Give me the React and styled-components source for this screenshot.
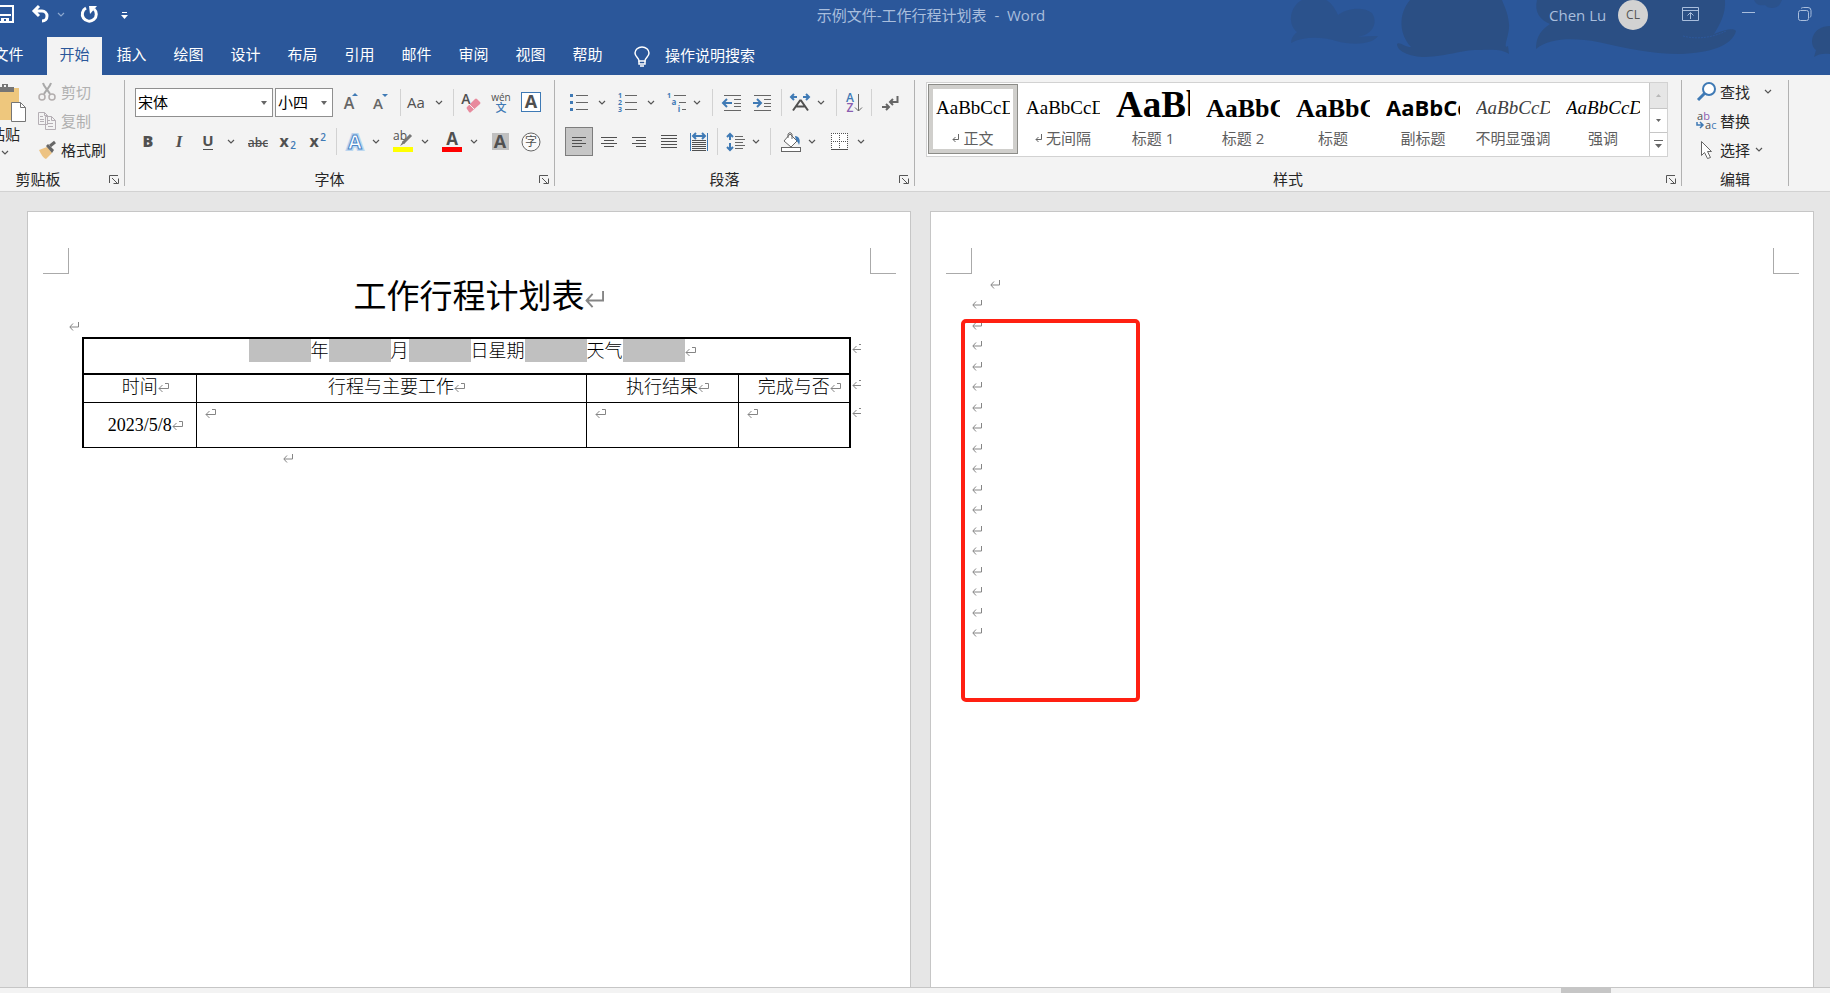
import React from "react";
import styled, { createGlobalStyle, css } from "styled-components";

const UI_FONT = `"Open Sans", "Noto Sans CJK SC", sans-serif`;
const DOC_FONT = `"Liberation Serif", "Noto Sans CJK SC", serif`;
const BLUE = "#3f7ab5";
const GRAY = "#666666";
const DARK = "#505050";

export default function App() {
  return (
    <Window>
      <GlobalStyle />
      <Header>
        <HeaderArt />
        <TitleBar />
        <TabBar />
      </Header>
      <Ribbon>
        <ClipboardGroup />
        <FontGroup />
        <ParagraphGroup />
        <StylesGroup />
        <EditingGroup />
      </Ribbon>
      <Workspace>
        <PlanPage />
        <BlankPage />
      </Workspace>
      <ScrollTrack>
        <ScrollThumb />
      </ScrollTrack>
    </Window>
  );
}

/* ---------- header ---------- */

function HeaderArt() {
  return (
    <Art viewBox="0 0 560 75" aria-hidden="true">
      <g fill="#2b4f84">
        <path
          opacity="0.6"
          d="M32 0C20 6 17 24 27 32 23 35 21 39 21 43 34 36 52 37 66 41 84 46 103 44 108 36 101 36 94 36 88 37 104 34 108 22 102 13 94 6 76 8 68 15 64 6 60 2 56 0Z"
        />
        <path d="M140 0C128 14 129 34 141 47 135 47 129 41 127 44 127 52 142 57 154 57 180 56 190 50 208 50 226 49 234 50 239 54L238 46C232 50 240 34 239 24 238 12 234 6 232 0Z" />
        <path d="M267 0C264 12 270 20 280 24 268 32 266 40 266 49 280 37 306 38 328 42 356 48 380 54 410 54 440 53 462 46 466 31 464 28 456 29 444 34 450 24 456 14 455 0Z" />
        <path opacity="0.6" d="M484 0C486 5 491 6 495 5 498 9 507 9 510 4L512 0Z" />
        <path d="M560 26C542 26 538 44 546 50L544 57C548 54 554 53 560 54Z" />
      </g>
      <path d="M413 36C428 40 444 37 456 31" fill="none" stroke="#2b579a" strokeWidth="1" strokeDasharray="2 1" />
    </Art>
  );
}

function TitleBar() {
  return (
    <TitleRow>
      <QuickAccess>
        <QuickButton aria-label="保存">
          <svg width="18" height="18" viewBox="0 0 18 18">
            <path d="M1 1h16v16H3l-2-2z" fill="none" stroke="#fff" strokeWidth="2" />
            <path d="M4 9h11v2H4z M5 13h8v4h-3v-3h-2v3H5z" fill="#fff" />
          </svg>
        </QuickButton>
        <QuickButton aria-label="撤消">
          <svg width="18" height="18" viewBox="0 0 18 18">
            <path d="M9 1 4 6l5 5M4 6h8a5 5 0 0 1 5 5c0 3-2 5-5 5" fill="none" stroke="#fff" strokeWidth="3" />
          </svg>
          <Chevron color="#8da8cf" />
        </QuickButton>
        <QuickButton aria-label="恢复">
          <svg width="18" height="18" viewBox="0 0 18 18">
            <path d="M5 3a7 7 0 1 0 8 1" fill="none" stroke="#fff" strokeWidth="3" />
            <path d="M8 1h8L9 9z" fill="#fff" />
          </svg>
        </QuickButton>
        <QuickButton aria-label="自定义快速访问工具栏" $apart>
          <svg width="7" height="8" viewBox="0 0 7 8">
            <path d="M1 2.500h5" stroke="#fff" />
            <path d="M0 5h7L3.500 9z" fill="#fff" />
          </svg>
        </QuickButton>
      </QuickAccess>
      <DocTitle>示例文件-工作行程计划表&nbsp; -&nbsp; Word</DocTitle>
      <Account>
        <UserName>Chen Lu</UserName>
        <Avatar>CL</Avatar>
        <WindowButtons>
          <QuickButton aria-label="功能区显示选项">
            <svg width="17" height="14" viewBox="0 0 17 14">
              <path d="M.5.5h16v13H.5zM.5 3.500h16M8.500 12V6M5.500 8.500l3-3 3 3" fill="none" stroke="#a9bedd" />
            </svg>
          </QuickButton>
          <QuickButton aria-label="最小化">
            <svg width="13" height="14" viewBox="0 0 13 14">
              <path d="M0 5.500h13" stroke="#a9bedd" />
            </svg>
          </QuickButton>
          <QuickButton aria-label="还原">
            <svg width="14" height="14" viewBox="0 0 14 14">
              <rect x=".5" y="3.500" width="10" height="10" rx="2" fill="none" stroke="#a9bedd" />
              <path d="M3 1.500c1-1 2-1 3-1h4q3 0 3 3v4c0 1 0 2-1 3" fill="none" stroke="#a9bedd" />
            </svg>
          </QuickButton>
        </WindowButtons>
      </Account>
    </TitleRow>
  );
}

const tabs = ["插入", "绘图", "设计", "布局", "引用", "邮件", "审阅", "视图", "帮助"];

function TabBar() {
  return (
    <Tabs>
      <Tab $file>文件</Tab>
      <Tab $active>开始</Tab>
      {tabs.map((name) => (
        <Tab key={name}>{name}</Tab>
      ))}
      <TellMe>
        <svg width="16" height="21" viewBox="0 0 16 21">
          <path d="M5 15c0-3-4-4-4-8a7 6 0 0 1 14 0c0 4-4 5-4 8z" fill="none" stroke="#fff" strokeWidth="1.500" />
          <path d="M5 15v3h6v-3M6 20h4" fill="none" stroke="#fff" strokeWidth="1.500" />
        </svg>
        <TellMeInput aria-label="操作说明搜索" placeholder="操作说明搜索" />
      </TellMe>
    </Tabs>
  );
}

/* ---------- ribbon parts ---------- */

function Chevron({ color = "#555" }) {
  return (
    <svg width="8" height="5" viewBox="0 0 8 5">
      <path d="M1 1l3 3 3-3" fill="none" stroke={color} strokeWidth="1.200" />
    </svg>
  );
}

function GroupFooter({ label, launcher = true }) {
  return (
    <Footer>
      <FooterLabel>{label}</FooterLabel>
      {launcher && (
        <Launcher aria-label={`${label}设置`}>
          <svg width="10" height="9" viewBox="0 0 10 9">
            <path d="M.5 8V.5H9M3 3l5 5M9.500 3.500v5h-5" fill="none" stroke="#555" />
          </svg>
        </Launcher>
      )}
    </Footer>
  );
}

function ToolButton({ label, children, selected, slim }) {
  return (
    <Tool aria-label={label} title={label} $selected={selected} $slim={slim}>
      <Glyph viewBox="0 0 22 24">{children}</Glyph>
    </Tool>
  );
}

function SplitButton({ label, children, near }) {
  return (
    <Split $near={near}>
      <ToolButton label={label}>{children}</ToolButton>
      <DropButton aria-label={`${label}选项`}>
        <Chevron />
      </DropButton>
    </Split>
  );
}

function Letter({ x = 11, y = 18, size = 16, fill = DARK, weight = 600, children, ...rest }) {
  return (
    <text x={x} y={y} fontSize={size} fill={fill} fontWeight={weight} textAnchor="middle" {...rest}>
      {children}
    </text>
  );
}

const lines = (rows) => rows.map(([x1, x2, y]) => `M${x1} ${y}.5H${x2}`).join("");

/* ---------- ribbon groups ---------- */

function ClipboardGroup() {
  return (
    <Group $clipboard>
      <Columns>
        <PasteButton>
          <svg width="44" height="40" viewBox="0 0 44 40">
            <path d="M8 5h28v32H8z" fill="#eec77d" />
            <path d="M13 9V4h6V1h6v3h6v5z" fill="#757575" />
            <path d="M21 2h2v2h-2z" fill="#f3f3f3" />
            <path d="M28.500 19.500h9l5 5v14h-14z" fill="#fff" stroke="#757575" />
            <path d="M37.500 19.500v5h5" fill="none" stroke="#757575" />
          </svg>
          <span>粘贴</span>
          <Chevron />
        </PasteButton>
        <Commands>
          <Command disabled>
            <CommandIcon viewBox="0 0 20 20">
              <path d="M5 1c1 4 5 7 7 11M13 1c-1 4-5 7-7 11" fill="none" stroke="#a9a9a9" strokeWidth="2" />
              <circle cx="4" cy="15" r="3" fill="none" stroke="#b3aeae" strokeWidth="1.500" />
              <circle cx="14" cy="15" r="3" fill="none" stroke="#b3aeae" strokeWidth="1.500" />
            </CommandIcon>
            剪切
          </Command>
          <Command disabled>
            <CommandIcon viewBox="0 0 20 20">
              <path d="M.5 1.500h6l3 3v9h-9zM6.500 1.500v3h3M7.500 5.500h6l4 4v9h-10zM13.500 5.500v4h4" fill="#f3f3f3" stroke="#b5afb5" />
              <path d="M2 5.500h3M2 8.500h4M2 10.500h4M10 9.500h2M10 12.500h5M10 15.500h5" stroke="#b5afb5" />
            </CommandIcon>
            复制
          </Command>
          <Command>
            <CommandIcon viewBox="0 0 20 20">
              <path d="M1 10l8-3 5 6-6 6c-3-1-5-5-7-9z" fill="#edc383" />
              <path d="M8 6l2-2 6 6-2 3z" fill="#666" />
              <path d="M12 6l5-4" stroke="#666" strokeWidth="3" />
            </CommandIcon>
            格式刷
          </Command>
        </Commands>
      </Columns>
      <GroupFooter label="剪贴板" />
    </Group>
  );
}

function FontGroup() {
  return (
    <Group $width={430}>
      <Rows>
        <ToolRow $inset={10}>
          <Combos>
            <Combo $width={138}>
              <ComboSelect aria-label="字体">
                <option>宋体</option>
              </ComboSelect>
              <ComboArrow viewBox="0 0 6 4">
                <path d="M0 0h6L3 4z" fill="#666" />
              </ComboArrow>
            </Combo>
            <Combo $width={58}>
              <ComboSelect aria-label="字号">
                <option>小四</option>
              </ComboSelect>
              <ComboArrow viewBox="0 0 6 4">
                <path d="M0 0h6L3 4z" fill="#666" />
              </ComboArrow>
            </Combo>
          </Combos>
          <ToolButton label="增大字号">
            <Letter x={8} fill={GRAY}>A</Letter>
            <path d="M11 5l3-3 3 3z" fill={BLUE} />
          </ToolButton>
          <ToolButton label="减小字号">
            <Letter x={7} size={15} fill={GRAY}>A</Letter>
            <path d="M11 3h6l-3 3z" fill={BLUE} />
          </ToolButton>
          <Divider $tight />
          <SplitButton label="更改大小写" near>
            <Letter x={8} y={17} size={15} weight={400}>Aa</Letter>
          </SplitButton>
          <Divider $tight />
          <ToolButton label="清除所有格式">
            <Letter x={5} y={13} size={14}>A</Letter>
            <path d="M6 16l8-8q1-1 2 0l3 3q1 1 0 2l-9 8q-1 1-2 0l-2-3q-1-1 0-2z" fill="#e88a9d" />
            <path d="M8 13l5 5" stroke="#f3f3f3" />
          </ToolButton>
          <ToolButton label="拼音指南">
            <Letter x={10} y={10} size={10} weight={400}>wén</Letter>
            <Letter x={10} y={21} size={11} weight={500} fill={BLUE}>文</Letter>
          </ToolButton>
          <ToolButton label="字符边框">
            <rect x=".5" y="1.500" width="19" height="19" fill="#fff" stroke={BLUE} />
            <Letter x={10} size={18} y={17} weight={700}>A</Letter>
          </ToolButton>
        </ToolRow>
        <ToolRow $inset={12}>
          <ToolButton label="加粗">
            <Letter y={17} weight={800}>B</Letter>
          </ToolButton>
          <ToolButton label="倾斜">
            <Letter x={12} y={17} size={17} weight={700} fontStyle="italic" fontFamily="Liberation Serif">I</Letter>
          </ToolButton>
          <SplitButton label="下划线">
            <Letter y={16} size={15} weight={700}>U</Letter>
            <path d="M6 19.500h10" stroke={DARK} />
          </SplitButton>
          <ToolButton label="删除线">
            <Letter x={12} y={17} size={12}>abc</Letter>
            <path d="M2 13.500h20" stroke={DARK} />
          </ToolButton>
          <ToolButton label="下标">
            <Letter x={8} y={17} weight={700}>x</Letter>
            <Letter x={17} y={19} size={10} fill={BLUE}>2</Letter>
          </ToolButton>
          <ToolButton label="上标">
            <Letter x={8} y={17} weight={700}>x</Letter>
            <Letter x={17} y={11} size={10} fill={BLUE}>2</Letter>
          </ToolButton>
          <Divider />
          <SplitButton label="文本效果" near>
            <Letter x={10} y={19} size={20} weight={700} fill="#fff" stroke="#bcd6ef" strokeWidth="4">A</Letter>
            <Letter x={10} y={19} size={20} weight={700} fill="#fff" stroke="#4a86c8" strokeWidth="1">A</Letter>
          </SplitButton>
          <SplitButton label="突出显示">
            <Letter x={9} y={10} size={12} weight={400}>ab</Letter>
            <path d="M20 5l-8 8" stroke="#777" strokeWidth="3" />
            <path d="M12 11l2 2-5 3z" fill="#777" />
            <path d="M2 17h20v5H2z" fill="#ff0" />
          </SplitButton>
          <SplitButton label="字体颜色">
            <Letter x={12} y={15} size={17} weight={700}>A</Letter>
            <path d="M2 17h20v5H2z" fill="#f00" />
          </SplitButton>
          <ToolButton label="字符底纹">
            <path d="M3 3h17v17H3z" fill="#c0c0c0" />
            <Letter y={18} size={18} weight={700}>A</Letter>
          </ToolButton>
          <ToolButton label="带圈字符">
            <circle cx="12" cy="12" r="9" fill="#fafafa" stroke={GRAY} />
            <Letter x={12} y={16} size={12} weight={400}>字</Letter>
          </ToolButton>
        </ToolRow>
      </Rows>
      <GroupFooter label="字体" />
    </Group>
  );
}

function ParagraphGroup() {
  return (
    <Group $width={360}>
      <Rows>
        <ToolRow $inset={13}>
          <SplitButton label="项目符号">
            <path d="M2 3h3v3H2zM2 10h3v3H2zM2 17h3v3H2z" fill={BLUE} />
            <path d={lines([[8, 20, 4], [8, 20, 11], [8, 20, 18]])} stroke={GRAY} />
          </SplitButton>
          <SplitButton label="编号">
            <Letter x={3} y={7} size={7} weight={700} fill={BLUE}>1</Letter>
            <Letter x={3} y={14} size={7} weight={700} fill={BLUE}>2</Letter>
            <Letter x={3} y={21} size={7} weight={700} fill={BLUE}>3</Letter>
            <path d={lines([[8, 20, 4], [8, 20, 11], [8, 20, 18]])} stroke={GRAY} />
          </SplitButton>
          <SplitButton label="多级列表" near>
            <Letter x={3} y={7} size={7} weight={700} fill={BLUE}>1</Letter>
            <Letter x={8} y={14} size={8} weight={700} fill={BLUE}>a</Letter>
            <Letter x={13} y={21} size={8} weight={700} fill={BLUE}>i</Letter>
            <path d={lines([[8, 20, 4], [13, 20, 11], [16, 20, 18]])} stroke={GRAY} />
          </SplitButton>
          <Divider />
          <ToolButton label="减少缩进量">
            <path d={lines([[3, 20, 4], [13, 20, 8], [13, 20, 12], [13, 20, 15], [3, 20, 19]])} stroke={GRAY} />
            <path d="M2 12h9M6 8l-4 4 4 4" fill="none" stroke={BLUE} strokeWidth="2" />
          </ToolButton>
          <ToolButton label="增加缩进量">
            <path d={lines([[3, 20, 4], [13, 20, 8], [13, 20, 12], [13, 20, 15], [3, 20, 19]])} stroke={GRAY} />
            <path d="M2 12h8M6 8l4 4-4 4" fill="none" stroke={BLUE} strokeWidth="2" />
          </ToolButton>
          <Divider />
          <SplitButton label="中文版式" near>
            <path d="M3 19.500l7-10h1l7 10M6 15.500h9" fill="none" stroke={DARK} strokeWidth="2" />
            <path d="M1 6h6M13 6h6M4 3L1 6l3 3M16 3l3 3-3 3" fill="none" stroke={BLUE} strokeWidth="2" />
          </SplitButton>
          <Divider />
          <ToolButton label="排序" slim>
            <Letter x={7} y={11} size={12} fill={BLUE}>A</Letter>
            <Letter x={7} y={21} size={12} fill="#8a5db0">Z</Letter>
            <path d="M15.500 3v17M12 16.500l3.500 3.500 3.500-3.500" fill="none" stroke={GRAY} />
          </ToolButton>
          <Divider />
          <ToolButton label="显示编辑标记">
            <path d="M17.500 5v6H10M13 8l-3 3 3 3M2 16h7M6 13l3 3-3 3" fill="none" stroke={GRAY} strokeWidth="2" />
          </ToolButton>
        </ToolRow>
        <ToolRow $inset={13}>
          <ToolButton label="左对齐" selected>
            <path d={lines([[4, 18, 7], [4, 14, 10], [4, 18, 13], [4, 14, 16]])} stroke={DARK} />
          </ToolButton>
          <ToolButton label="居中">
            <path d={lines([[3, 19, 7], [6, 16, 10], [3, 19, 13], [6, 16, 16]])} stroke={DARK} />
          </ToolButton>
          <ToolButton label="右对齐">
            <path d={lines([[4, 18, 7], [8, 18, 10], [4, 18, 13], [8, 18, 16]])} stroke={DARK} />
          </ToolButton>
          <ToolButton label="两端对齐">
            <path d={lines([[3, 19, 5], [3, 19, 8], [3, 19, 11], [3, 19, 14], [3, 19, 17]])} stroke={DARK} />
          </ToolButton>
          <ToolButton label="分散对齐">
            <path d={lines([[4, 18, 10], [4, 18, 12], [4, 18, 14], [4, 18, 16], [4, 18, 18], [4, 18, 20]])} stroke={DARK} />
            <path d="M2.500 3v18M19.500 3v18" stroke={BLUE} />
            <path d="M5 6h12M8 3L5 6l3 3M14 3l3 3-3 3" fill="none" stroke={BLUE} strokeWidth="2" />
          </ToolButton>
          <Divider $tight />
          <SplitButton label="行和段落间距" near>
            <path d="M5 4v6M2 7l3-3 3 3M5 13v6M2 17l3 3 3-3" fill="none" stroke={BLUE} strokeWidth="2" />
            <path d={lines([[10, 18, 6], [10, 20, 9], [10, 18, 12], [10, 20, 15], [10, 18, 18]])} stroke={GRAY} />
          </SplitButton>
          <Divider $tight />
          <SplitButton label="底纹">
            <path d="M12 4l7 7-6 6-7-6z" fill="#fff" stroke={GRAY} />
            <path d="M10 8V4q2-3 4 0v5" fill="none" stroke={GRAY} />
            <path d="M17 6c4 0 6 4 4 9-1-4-3-3-4-9z" fill={BLUE} />
            <rect x="3.500" y="17.500" width="19" height="4" fill="#fff" stroke={GRAY} />
          </SplitButton>
          <SplitButton label="边框">
            <path d="M4 3h16v16H4z" fill="#fff" />
            <path d="M4 3.500h17M4 11.500h17M4.500 3v16M12.500 3v16M20.500 3v16" stroke={DARK} strokeDasharray="1 1" />
            <path d="M4 19.500h17" stroke={DARK} />
          </SplitButton>
        </ToolRow>
      </Rows>
      <GroupFooter label="段落" />
    </Group>
  );
}

const SERIF = `"Liberation Serif", serif`;
const styleCards = [
  { name: "正文", sample: "AaBbCcD", size: 19, lead: 41, para: true, selected: true },
  { name: "无间隔", sample: "AaBbCcD", size: 19, lead: 41, para: true },
  { name: "标题 1", sample: "AaBb", size: 37, lead: 35, bold: true },
  { name: "标题 2", sample: "AaBbC", size: 26, lead: 44, bold: true },
  { name: "标题", sample: "AaBbC", size: 26, lead: 44, bold: true },
  { name: "副标题", sample: "AaBbCc", size: 22, lead: 41, bold: true, font: UI_FONT },
  { name: "不明显强调", sample: "AaBbCcD", size: 19, lead: 41, italic: true, color: "#404040" },
  { name: "强调", sample: "AaBbCcD", size: 19, lead: 41, italic: true },
];

function StylesGroup() {
  return (
    <Group $grow>
      <Gallery>
        <Cards>
          {styleCards.map((card) => (
            <Card key={card.name} aria-pressed={!!card.selected} $selected={card.selected}>
              <Sample
                $size={card.size}
                $lead={card.lead}
                $bold={card.bold}
                $italic={card.italic}
                $font={card.font || SERIF}
                $color={card.color || "#000"}
              >
                {card.sample}
              </Sample>
              <CardName>
                {card.para && (
                  <svg width="7" height="8" viewBox="0 0 7 8">
                    <path d="M6.500 1v5.500H1M3.500 4L1 6.500 3.500 9" fill="none" stroke="#666" />
                  </svg>
                )}
                {card.name}
              </CardName>
            </Card>
          ))}
        </Cards>
        <GalleryScroll>
          <ScrollButton aria-label="上一行" disabled>
            <svg width="7" height="9" viewBox="0 0 7 9">
              <path d="M1 6h5L3.500 3z" fill="#b8b8b8" />
            </svg>
          </ScrollButton>
          <ScrollButton aria-label="下一行">
            <svg width="7" height="9" viewBox="0 0 7 9">
              <path d="M1 3h5L3.500 6z" fill="#666" />
            </svg>
          </ScrollButton>
          <ScrollButton aria-label="其他">
            <svg width="9" height="9" viewBox="0 0 9 9">
              <path d="M0 .5h9" stroke="#666" />
              <path d="M1 4h7L4.500 8z" fill="#666" />
            </svg>
          </ScrollButton>
        </GalleryScroll>
      </Gallery>
      <GroupFooter label="样式" />
    </Group>
  );
}

function EditingGroup() {
  return (
    <Group $width={107}>
      <Columns>
        <Commands $inset={14}>
          <Command>
            <CommandIcon viewBox="0 0 20 20">
              <circle cx="13" cy="7" r="6" fill="#fff" stroke={BLUE} strokeWidth="2" />
              <path d="M9 11l-7 7" stroke={BLUE} strokeWidth="3" />
            </CommandIcon>
            <CommandText $wide>查找</CommandText>
            <Chevron />
          </Command>
          <Command>
            <CommandIcon viewBox="0 0 20 20">
              <text x="1" y="9" fontSize="11" fill={DARK}>
                a<tspan fill="#8a5db0">b</tspan>
              </text>
              <text x="9" y="18" fontSize="11" fill={DARK}>
                a<tspan fill={BLUE}>c</tspan>
              </text>
              <path d="M1 11v3h6M4 11l3 3-3 3" fill="none" stroke={BLUE} strokeWidth="1.500" />
            </CommandIcon>
            <CommandText>替换</CommandText>
          </Command>
          <Command>
            <CommandIcon viewBox="0 0 20 20">
              <path d="M5.500 1.500v14l3-3 3 6 3-1-3-6h4z" fill="#fff" stroke={GRAY} />
            </CommandIcon>
            <CommandText>选择</CommandText>
            <Chevron />
          </Command>
        </Commands>
      </Columns>
      <GroupFooter label="编辑" launcher={false} />
    </Group>
  );
}

/* ---------- document ---------- */

function LineMark({ large }) {
  return (
    <MarkSvg $width={large ? 19 : 10} viewBox="0 0 10 9">
      <path d="M9.500 0v5H1M4 1.500L.8 5 4 8.500" fill="none" stroke="#858585" />
    </MarkSvg>
  );
}

function CellMark() {
  return (
    <MarkSvg $width={11} viewBox="0 0 11 10">
      <path d="M7 .5h3.500v5H1M4.500 2L1 5.500 4.500 9" fill="none" stroke="#858585" />
    </MarkSvg>
  );
}

function RowMark() {
  return (
    <MarkSvg $width={9} viewBox="0 0 9 10">
      <path d="M7 .5h2M9 5.500H1M4.500 2L1 5.500 4.500 9" fill="none" stroke="#858585" />
    </MarkSvg>
  );
}

function PlanPage() {
  return (
    <Page>
      <Corners>
        <Corner $side="right" />
        <Corner $side="left" />
      </Corners>
      <PageBody>
        <PlanTitle>
          工作行程计划表
          <LineMark large />
        </PlanTitle>
        <Line>
          <LineMark />
        </Line>
        <PlanTable>
          <colgroup>
            <Col $width={113} />
            <Col />
            <Col $width={152} />
            <Col $width={112} />
            <Col $width={13} />
          </colgroup>
          <tbody>
            <tr>
              <DateCell colSpan={4}>
                <DateLine>
                  <Field />年
                  <Field />月
                  <Field />日星期
                  <Field />天气
                  <Field />
                  <CellMark />
                </DateLine>
              </DateCell>
              <EndCell><RowMark /></EndCell>
            </tr>
            <tr>
              {["时间", "行程与主要工作", "执行结果", "完成与否"].map((head) => (
                <HeadCell key={head} scope="col">
                  {head}
                  <CellMark />
                </HeadCell>
              ))}
              <EndCell><RowMark /></EndCell>
            </tr>
            <tr>
              <DayCell>
                2023/5/8
                <CellMark />
              </DayCell>
              <EmptyCell><CellMark /></EmptyCell>
              <EmptyCell><CellMark /></EmptyCell>
              <EmptyCell><CellMark /></EmptyCell>
              <EndCell><RowMark /></EndCell>
            </tr>
          </tbody>
        </PlanTable>
        <Line $indent={214}>
          <LineMark />
        </Line>
      </PageBody>
    </Page>
  );
}

const blankLines = Array.from({ length: 17 }, (_, i) => i);

function BlankPage() {
  return (
    <Page>
      <Corners>
        <Corner $side="right" />
        <Corner $side="left" />
      </Corners>
      <PageBody>
        <Line $indent={18}>
          <LineMark />
        </Line>
        {blankLines.map((n) => (
          <Line key={n}>
            <LineMark />
          </Line>
        ))}
      </PageBody>
      <RedFrame />
    </Page>
  );
}

/* ---------- styles ---------- */

const GlobalStyle = createGlobalStyle`
  * {
    box-sizing: border-box;
  }
  body {
    margin: 0;
    overflow: hidden;
    font-family: ${UI_FONT};
    font-size: 15px;
    color: #262626;
  }
  button, input, select {
    font: inherit;
    color: inherit;
    background: none;
    border: 0;
    margin: 0;
    padding: 0;
  }
  svg {
    flex-shrink: 0;
    overflow: visible;
  }
`;

const Window = styled.div`
  display: flex;
  flex-direction: column;
  height: 100vh;
  overflow: hidden;
  background: #e6e6e6;
`;

const Header = styled.header`
  position: relative;
  background: #2b579a;
  color: #fff;
`;

const Art = styled.svg`
  position: absolute;
  top: 0;
  right: 0;
  width: 560px;
  height: 75px;
  overflow: hidden;
`;

const TitleRow = styled.div`
  position: relative;
  display: grid;
  grid-template-columns: 313px 1fr 281px;
  height: 37px;
`;

const QuickAccess = styled.div`
  display: flex;
  align-items: center;
  gap: 16px;
  height: 28px;
  margin-left: -4px;
`;

const QuickButton = styled.button`
  display: flex;
  align-items: center;
  gap: 9px;
  margin-left: ${({ $apart }) => ($apart ? 6 : 0)}px;
`;

const DocTitle = styled.div`
  line-height: 30px;
  text-align: center;
  color: #a9bedd;
`;

const Account = styled.div`
  display: flex;
  height: 30px;
  line-height: 30px;
`;

const UserName = styled.span`
  width: 69px;
  color: #a9bedd;
`;

const Avatar = styled.span`
  width: 30px;
  border-radius: 50%;
  background: #d2d2d2;
  color: #555;
  font-size: 12px;
  text-align: center;
`;

const WindowButtons = styled.div`
  flex: 1;
  display: flex;
  align-items: center;
  justify-content: space-between;
  height: 27px;
  padding: 0 18px 0 34px;
`;

const Tabs = styled.nav`
  position: relative;
  display: flex;
  height: 38px;
  margin-left: -20px;
`;

const Tab = styled.button`
  width: 57px;
  padding-bottom: 4px;
  line-height: 34px;
  ${({ $file }) => $file && "margin-right: 10px;"}
  ${({ $active }) =>
    $active &&
    css`
      width: 55px;
      margin-right: 1px;
      background: #f3f3f3;
      color: #2b579a;
    `}
`;

const TellMe = styled.label`
  display: flex;
  align-items: center;
  gap: 15px;
  margin-left: 18px;
`;

const TellMeInput = styled.input`
  width: 140px;
  padding-bottom: 2px;
  line-height: 36px;

  &::placeholder {
    color: #fff;
    opacity: 1;
  }
`;

const Ribbon = styled.section`
  display: flex;
  padding: 5px 41px 5px 0;
  background: #f3f3f3;
  border-bottom: 1px solid #d2d2d2;
`;

const Group = styled.div`
  display: flex;
  flex-direction: column;
  flex: ${({ $grow }) => ($grow ? "1 1 0" : "none")};
  min-width: 0;
  width: ${({ $width, $clipboard }) => ($clipboard ? "153px" : $width ? `${$width}px` : "auto")};
  height: 106px;
  margin-left: ${({ $clipboard }) => ($clipboard ? "-28px" : "0")};
  border-right: 1px solid #b1b1b1;
`;

const Footer = styled.div`
  display: flex;
  margin-top: auto;
  height: 16px;
  line-height: 18px;
`;

const FooterLabel = styled.div`
  flex: 1;
  text-align: center;
`;

const Launcher = styled.button`
  display: flex;
  align-items: center;
  width: 20px;
  padding: 2px 0 0 5px;
`;

const Columns = styled.div`
  display: flex;
`;

const PasteButton = styled.button`
  display: flex;
  flex-direction: column;
  align-items: center;
  width: 66px;
  padding-top: 3px;
  line-height: 22px;

  span {
    margin-bottom: 5px;
  }
`;

const Commands = styled.div`
  display: flex;
  flex-direction: column;
  gap: 2px;
  margin-top: -2px;
  padding-left: ${({ $inset = 0 }) => $inset}px;
`;

const Command = styled.button`
  display: flex;
  align-items: center;
  gap: 3px;
  height: 27px;

  &:disabled {
    color: #b0b0b0;
  }
`;

const CommandIcon = styled.svg`
  width: 20px;
  height: 20px;
`;

const CommandText = styled.span`
  width: ${({ $wide }) => ($wide ? 42 : 33)}px;
  padding-left: 1px;
  text-align: left;
`;

const Rows = styled.div`
  display: flex;
  flex-direction: column;
  gap: 10px;
  padding-top: 8px;
`;

const ToolRow = styled.div`
  display: flex;
  align-items: center;
  gap: 8px;
  height: 29px;
  padding-left: ${({ $inset }) => $inset}px;
`;

const Combos = styled.div`
  display: flex;
  gap: 2px;
`;

const Combo = styled.div`
  display: flex;
  align-items: center;
  width: ${({ $width }) => $width}px;
  height: 29px;
  padding-right: 5px;
  background: #fff;
  border: 1px solid #8f8f8f;
`;

const ComboSelect = styled.select`
  flex: 1;
  min-width: 0;
  appearance: none;
  padding-left: 2px;
  line-height: 27px;
  color: #000;
`;

const ComboArrow = styled.svg`
  width: 6px;
  height: 4px;
`;

const Tool = styled.button`
  display: flex;
  align-items: center;
  justify-content: center;
  flex: none;
  width: ${({ $slim }) => ($slim ? 18 : 22)}px;
  height: 29px;
  ${({ $selected }) =>
    $selected &&
    css`
      width: 28px;
      margin: 0 -3px;
      background: #c6c6c6;
      border: 1px solid #7d7d7d;
    `}
`;

const Glyph = styled.svg`
  width: 22px;
  height: 24px;
`;

const Split = styled.div`
  display: flex;
  align-items: center;
  gap: ${({ $near }) => ($near ? 4 : 7)}px;
  padding-right: 2px;
`;

const DropButton = styled.button`
  display: flex;
  align-items: center;
  justify-content: center;
  width: 10px;
  height: 29px;
`;

const Divider = styled.span`
  width: 1px;
  height: 27px;
  margin: 0 ${({ $tight }) => ($tight ? -1 : 0)}px;
  background: #d2d2d2;
`;

const Gallery = styled.div`
  display: flex;
  height: 75px;
  margin: 2px 13px 0 11px;
  background: #fff;
  border: 1px solid #d2d2d2;
`;

const Cards = styled.div`
  display: flex;
  flex: 1;
  min-width: 0;
  padding: 1px;
  overflow: hidden;
`;

const Card = styled.button`
  flex: none;
  width: 90px;
  height: 70px;
  padding: 2px 7px 4px;
  border: 1px solid ${({ $selected }) => ($selected ? "#8c8c88" : "transparent")};
  box-shadow: ${({ $selected }) => ($selected ? "inset 0 0 0 4px #d0cfcc" : "none")};
`;

const Sample = styled.div`
  height: 38px;
  overflow: hidden;
  text-align: left;
  white-space: nowrap;
  font-family: ${({ $font }) => $font};
  font-size: ${({ $size }) => $size}px;
  line-height: ${({ $lead }) => $lead}px;
  font-weight: ${({ $bold }) => ($bold ? 700 : 400)};
  font-style: ${({ $italic }) => ($italic ? "italic" : "normal")};
  color: ${({ $color }) => $color};
`;

const CardName = styled.div`
  display: flex;
  align-items: center;
  justify-content: center;
  gap: 4px;
  height: 24px;
  white-space: nowrap;
  color: #5e5e5e;
`;

const GalleryScroll = styled.div`
  display: grid;
  grid-template-rows: 25px 24px 24px;
  width: 18px;
  border-left: 1px solid #c6c6c6;
`;

const ScrollButton = styled.button`
  display: flex;
  align-items: center;
  justify-content: center;

  &:disabled {
    background: #e6e6e6;
  }
  & + & {
    border-top: 1px solid #c6c6c6;
  }
`;

const Workspace = styled.main`
  display: flex;
  flex: 1;
  min-height: 0;
  gap: 19px;
  padding: 19px 16px 0 27px;
`;

const Page = styled.article`
  position: relative;
  flex: 1;
  min-width: 0;
  padding-top: 36px;
  background: #fff;
  border: 1px solid #c6c6c6;
  border-bottom: 0;
  font-family: ${DOC_FONT};
  color: #000;
`;

const Corners = styled.div`
  display: flex;
  justify-content: space-between;
  padding: 0 14px 0 15px;
`;

const Corner = styled.div`
  width: 26px;
  height: 26px;
  border: 0 solid #aaa;
  border-bottom-width: 1px;
  border-${({ $side }) => $side}-width: 1px;
`;

const PageBody = styled.div`
  padding: 0 41px;
`;

const MarkSvg = styled.svg`
  width: ${({ $width }) => $width}px;
  margin-right: -${({ $width }) => $width}px;
`;

const PlanTitle = styled.h1`
  margin: 0;
  padding-top: 4px;
  font-size: 33px;
  font-weight: 400;
  line-height: 38px;
  text-align: center;
`;

const Line = styled.div`
  display: flex;
  align-items: center;
  height: 20px;
  padding-left: ${({ $indent = 0 }) => $indent}px;

  &:nth-child(even) {
    height: 21px;
  }
`;

const PlanTable = styled.table`
  width: calc(100% - 18px);
  margin-left: 13px;
  table-layout: fixed;
  border-collapse: collapse;
  font-size: 18px;
  line-height: 25px;
`;

const Col = styled.col`
  width: ${({ $width }) => ($width ? `${$width}px` : "auto")};
`;

const cell = css`
  padding: 0;
  border: 1px solid #000;
  font-weight: 300;
  text-align: center;
  vertical-align: top;

  &:first-child {
    border-left-width: 2px;
  }
  &:nth-last-child(2) {
    border-right-width: 2px;
  }
`;

const DateCell = styled.td`
  ${cell}
  height: 36px;
  border-width: 2px;
`;

const DateLine = styled.div`
  display: flex;
  align-items: center;
  justify-content: center;
`;

const Field = styled.span`
  align-self: flex-start;
  width: 62px;
  height: 23px;
  background: #c0c0c0;
`;

const HeadCell = styled.th`
  ${cell}
  height: 28px;
`;

const DayCell = styled.td`
  ${cell}
  height: 45px;
  padding-top: 2px;
  vertical-align: middle;
`;

const EmptyCell = styled.td`
  ${cell}
  padding-left: 8px;
  line-height: 20px;
  text-align: left;
`;

const EndCell = styled.td`
  padding: 0 0 0 1px;
  line-height: 20px;
  vertical-align: top;
`;

const RedFrame = styled.div`
  position: absolute;
  top: 107px;
  left: 30px;
  width: 179px;
  height: 383px;
  border: 4px solid #ff2012;
  border-radius: 5px;
`;

const ScrollTrack = styled.div`
  display: flex;
  justify-content: flex-end;
  height: 6px;
  padding-right: 219px;
  background: #f3f3f3;
  border-top: 1px solid #c6c6c6;
`;

const ScrollThumb = styled.div`
  width: 50px;
  background: #c6c6c6;
`;
